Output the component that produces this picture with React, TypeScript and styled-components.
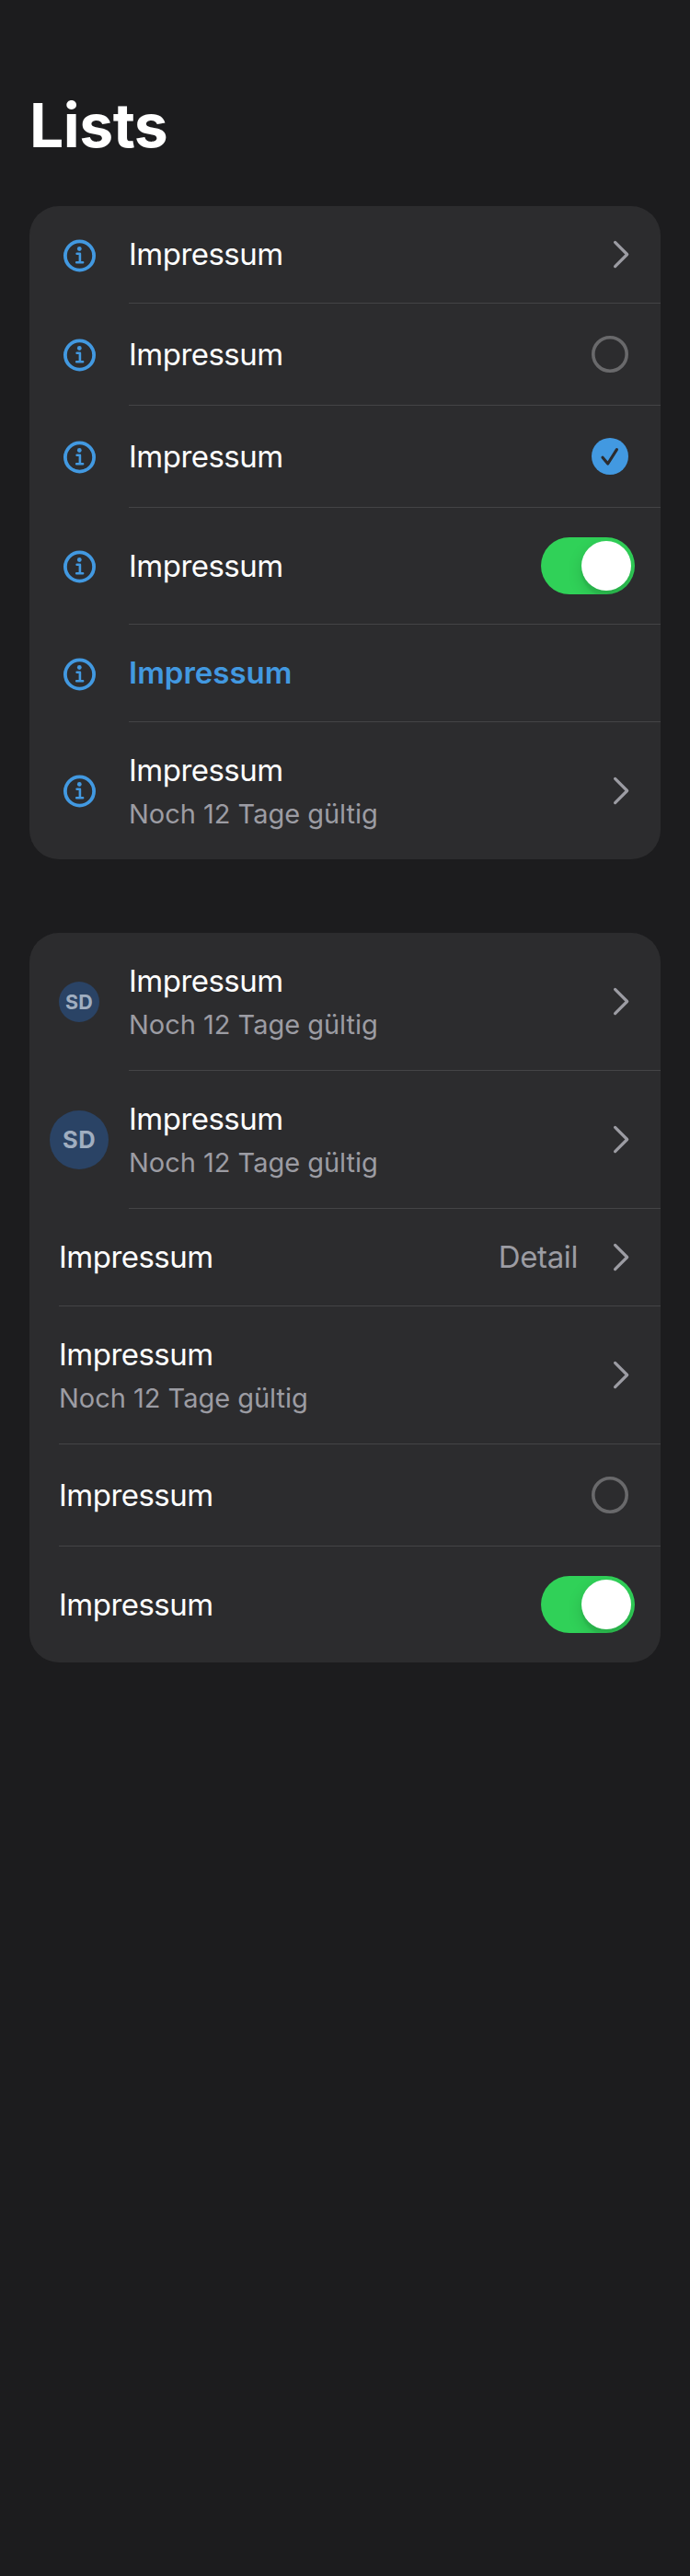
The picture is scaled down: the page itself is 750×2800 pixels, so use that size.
import React from 'react';
import styled, { createGlobalStyle, css } from 'styled-components';

const color = {
  page: '#1c1c1e',
  card: '#2c2c2e',
  line: '#444446',
  text: '#ffffff',
  muted: '#9c9ca3',
  ring: '#69696b',
  accent: '#4299e1',
  green: '#30d158',
  avatar: '#2a4365',
  avatarText: '#a0aec0',
};

const GlobalStyle = createGlobalStyle`
  body {
    margin: 0;
    background: ${color.page};
    font-family: Inter, 'Liberation Sans', sans-serif;
    -webkit-font-smoothing: antialiased;
  }
`;

const Page = styled.main`
  box-sizing: border-box;
  width: 750px;
  min-height: 2800px;
  padding: 96px 32px 0;
  background: ${color.page};
`;

const Heading = styled.h1`
  height: 80px;
  margin: 0 0 48px;
  color: ${color.text};
  font-size: 66px;
  font-weight: 700;
  line-height: 80px;
  letter-spacing: -0.5px;
`;

const Card = styled.section`
  margin-bottom: 80px;
  border-radius: 32px;
  background: ${color.card};
  overflow: hidden;
`;

const Row = styled.div`
  display: flex;
  &:last-child > :last-child {
    border-bottom: 0;
  }
`;

const Leading = styled.div<{ $shift: number }>`
  display: flex;
  align-items: center;
  justify-content: center;
  width: 108px;
  padding-top: ${(p) => p.$shift}px;
`;

const Body = styled.div<{ $height: number; $inset: boolean }>`
  display: flex;
  flex: 1;
  align-items: center;
  justify-content: space-between;
  height: ${(p) => p.$height}px;
  margin-left: ${(p) => (p.$inset ? 32 : 0)}px;
  border-bottom: 1px solid ${color.line};
`;

const Texts = styled.div<{ $odd: boolean }>`
  padding-bottom: ${(p) => (p.$odd ? 1 : 0)}px;
`;

const Label = styled.div<{ $strong?: boolean }>`
  color: ${color.text};
  font-size: 33px;
  line-height: 42px;
  letter-spacing: -0.53px;
  ${(p) =>
    p.$strong &&
    css`
      color: ${color.accent};
      font-weight: 600;
      letter-spacing: 0;
    `}
`;

const Subtitle = styled.div`
  margin-top: 8px;
  color: ${color.muted};
  font-size: 29px;
  line-height: 37px;
  letter-spacing: -0.02px;
`;

const Trailing = styled.div<{ $right: number }>`
  display: flex;
  align-items: center;
  margin-right: ${(p) => p.$right}px;
`;

const Detail = styled.span`
  margin-right: 37px;
  padding-bottom: 1px;
  color: ${color.muted};
  font-size: 33px;
  line-height: 42px;
  letter-spacing: -0.4px;
`;

const Avatar = styled.div<{ $large?: boolean }>`
  width: ${(p) => (p.$large ? 64 : 44)}px;
  height: ${(p) => (p.$large ? 64 : 44)}px;
  border-radius: 50%;
  background: ${color.avatar};
  color: ${color.avatarText};
  font-size: ${(p) => (p.$large ? 25.5 : 21.5)}px;
  font-weight: 700;
  line-height: ${(p) => (p.$large ? 64 : 44)}px;
  letter-spacing: ${(p) => (p.$large ? 0.5 : 0.2)}px;
  text-align: center;
`;

const Switch = styled.span`
  display: flex;
  justify-content: flex-end;
  box-sizing: border-box;
  width: 102px;
  height: 62px;
  padding: 4px;
  border-radius: 31px;
  background: ${color.green};
  overflow: hidden;
`;

const Knob = styled.span`
  width: 54px;
  height: 54px;
  border-radius: 50%;
  background: #fff;
  box-shadow: 0 6px 16px rgba(0, 0, 0, 0.15), 0 6px 2px rgba(0, 0, 0, 0.06);
`;

const InfoIcon = () => (
  <svg width="44" height="44" viewBox="0 0 44 44" fill="none" stroke={color.accent}>
    <circle cx="22.5" cy="22" r="15.6" strokeWidth="3.8" />
    <circle cx="22.3" cy="14.5" r="2.4" fill={color.accent} stroke="none" />
    <path d="M19.6 19.8h3.3v9.4M19.2 29.3h6.9" strokeWidth="2.6" strokeLinecap="round" strokeLinejoin="round" />
  </svg>
);

const Chevron = () => (
  <svg width="19" height="31" viewBox="0 0 19 31" fill="none">
    <path d="M3.6 2.4L16.7 15.5L3.6 28.6" stroke={color.muted} strokeWidth="3.2" strokeLinecap="round" strokeLinejoin="round" />
  </svg>
);

const Radio = () => (
  <svg width="40" height="40" viewBox="0 0 40 40" fill="none">
    <circle cx="20" cy="20" r="18.2" stroke={color.ring} strokeWidth="3.6" />
  </svg>
);

const Checked = () => (
  <svg width="40" height="40" viewBox="0 0 40 40" fill="none">
    <circle cx="20" cy="20" r="20" fill={color.accent} />
    <path d="M12 21.3L17.7 28L27.4 12.7" stroke={color.card} strokeWidth="3.2" strokeLinecap="round" strokeLinejoin="round" />
  </svg>
);

type Control = 'chevron' | 'radio' | 'checked' | 'switch' | 'none';

const controls: Record<Control, React.ReactNode> = {
  chevron: <Chevron />,
  radio: <Radio />,
  checked: <Checked />,
  switch: (
    <Switch>
      <Knob />
    </Switch>
  ),
  none: null,
};

interface ItemProps {
  leading?: 'info' | 'avatar' | 'avatarLarge';
  control: Control;
  subtitle?: string;
  detail?: string;
  strong?: boolean;
}

function Item({ leading, control, subtitle, detail, strong }: ItemProps) {
  const single = control === 'chevron' || control === 'none';
  const height = subtitle ? 149 : control === 'switch' ? 126 : single ? 105 : 110;
  const right = control === 'switch' ? 28 : control === 'chevron' ? 34 : 35;
  return (
    <Row>
      {leading && (
        <Leading $shift={leading === 'info' && height === 105 ? 1 : 0}>
          {leading === 'info' ? <InfoIcon /> : <Avatar $large={leading === 'avatarLarge'}>SD</Avatar>}
        </Leading>
      )}
      <Body $height={height} $inset={!leading}>
        <Texts $odd={height === 105}>
          <Label $strong={strong}>Impressum</Label>
          {subtitle && <Subtitle>{subtitle}</Subtitle>}
        </Texts>
        <Trailing $right={right}>
          {detail && <Detail>{detail}</Detail>}
          {controls[control]}
        </Trailing>
      </Body>
    </Row>
  );
}

export default function App() {
  const note = 'Noch 12 Tage gültig';
  return (
    <Page>
      <GlobalStyle />
      <Heading>Lists</Heading>
      <Card>
        <Item leading="info" control="chevron" />
        <Item leading="info" control="radio" />
        <Item leading="info" control="checked" />
        <Item leading="info" control="switch" />
        <Item leading="info" control="none" strong />
        <Item leading="info" control="chevron" subtitle={note} />
      </Card>
      <Card>
        <Item leading="avatar" control="chevron" subtitle={note} />
        <Item leading="avatarLarge" control="chevron" subtitle={note} />
        <Item control="chevron" detail="Detail" />
        <Item control="chevron" subtitle={note} />
        <Item control="radio" />
        <Item control="switch" />
      </Card>
    </Page>
  );
}
